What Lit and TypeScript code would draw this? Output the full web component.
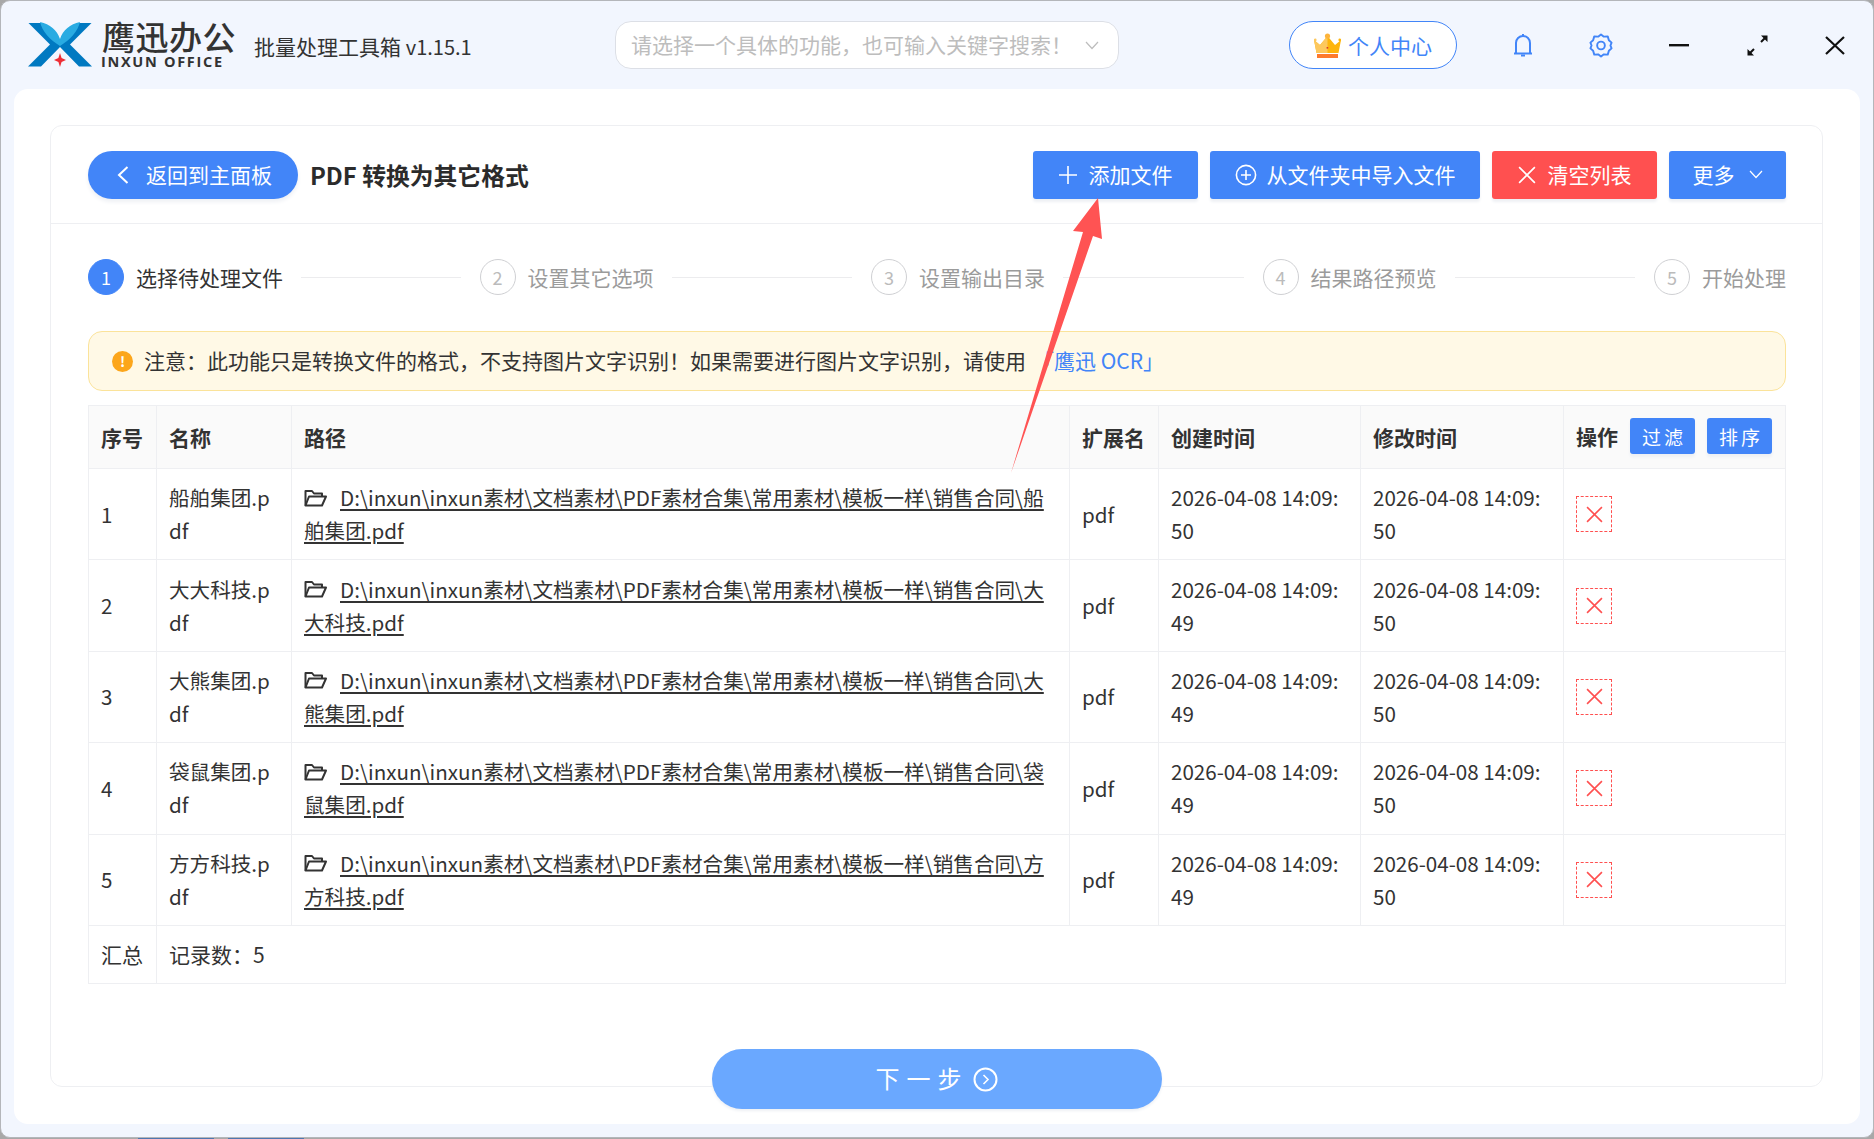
import { LitElement, html, css } from "lit";
import { customElement } from "lit/decorators.js";

const rows = ["船舶集团.pdf", "大大科技.pdf", "大熊集团.pdf", "袋鼠集团.pdf", "方方科技.pdf"];
const created = ["50", "49", "49", "49", "49"];
const base = "D:\\inxun\\inxun素材\\文档素材\\PDF素材合集\\常用素材\\模板一样\\销售合同\\";

const chevronDown = html`<svg class="chev" viewBox="0 0 14 9" width="14" height="9"><path d="M1 1l6 6.5L13 1" fill="none" stroke="currentColor" stroke-width="1.2"/></svg>`;

@customElement("app-root")
export class AppRoot extends LitElement {
  static styles = css`
    :host {
      display: block;
      width: 1874px;
      height: 1139px;
      position: relative;
      overflow: hidden;
      background: #a8a8a8;
      font-family: "Noto Sans CJK SC", "Noto Sans", sans-serif;
      font-size: 21px;
      color: #333;
    }
    * { box-sizing: border-box; }
    .window {
      height: 1138px;
      background: #f2f6fe;
      border: 1px solid #b4b6ba;
      border-radius: 10px;
      display: flex;
      flex-direction: column;
      overflow: hidden;
      position: relative;
      z-index: 1;
    }
    .desk { position: absolute; bottom: 0; height: 2px; width: 76px; background: #4f76b0; }
    .desk.a { left: 138px; }
    .desk.b { left: 228px; }
    .top {
      height: 88px;
      flex: none;
      display: flex;
      align-items: center;
      padding-left: 27px;
    }
    .top > * { flex: none; }
    .logo-mark { width: 64px; height: 46px; flex: none; }
    .brand { margin-left: 10px; width: 134px; display: flex; flex-direction: column; color: #333; padding-bottom: 2px; }
    .brand-cn { font-size: 33px; line-height: 33px; font-weight: 500; letter-spacing: 0.5px; white-space: nowrap; }
    .brand-en { font-family: "Open Sans", sans-serif; font-size: 14.5px; line-height: 14px; font-weight: 700; letter-spacing: 1.7px; white-space: nowrap; margin-top: 2px; margin-left: -1px; }
    .app-title { margin-left: 18px; width: 361px; white-space: nowrap; color: #333; padding-top: 2px; }
    .ver { font-size: 20px; }
    .search {
      width: 504px;
      height: 48px;
      background: #fff;
      border: 1px solid #dcdfe6;
      border-radius: 16px;
      display: flex;
      align-items: center;
      justify-content: space-between;
      padding: 0 19px 0 15px;
      color: #bdbdbd;
      white-space: nowrap;
    }
    .search span { margin-top: -2px; }
    .personal {
      margin-left: 170px;
      width: 168px;
      height: 48px;
      background: #fff;
      border: 1px solid #4285f8;
      border-radius: 24px;
      display: flex;
      align-items: center;
      justify-content: center;
      gap: 7px;
      color: #4285f8;
    }
    .tools { display: flex; align-items: center; margin-left: 27px; }
    .tool { display: flex; align-items: center; justify-content: center; width: 78px; height: 40px; flex: none; }
    .panel {
      flex: 1;
      margin: 0 13px 13px 13px;
      background: #fff;
      border-radius: 14px;
      padding: 36px 37px 15px 36px;
      display: flex;
      flex-direction: column;
      align-items: stretch;
      min-height: 0;
    }
    .card {
      height: 962px;
      flex: none;
      border: 1px solid #eeeff2;
      border-radius: 12px;
      padding: 0 36px 0 37px;
      display: flex;
      flex-direction: column;
    }
    .bar {
      height: 98px;
      flex: none;
      margin: 0 -36px 0 -37px;
      padding: 0 36px 0 37px;
      border-bottom: 1px solid #eeeff2;
      display: flex;
      align-items: center;
    }
    .back {
      width: 210px; height: 48px;
      border-radius: 24px;
      background: #4285f8;
      color: #fff;
      display: flex; align-items: center; justify-content: flex-start;
      padding-left: 29px;
      gap: 17px;
      box-shadow: 0 3px 4px #eef0f4;
      white-space: nowrap;
      flex: none;
    }
    .back span, .btn span, .notice span, .notice a { margin-top: -2px; }
    .title { margin-left: 12px; font-size: 23.8px; font-weight: 700; color: #2b2b2b; white-space: nowrap; flex: 1; margin-top: -1px; }
    .btn {
      height: 48px;
      border-radius: 3px;
      background: #4285f8;
      color: #fff;
      display: flex; align-items: center; justify-content: center;
      gap: 10px;
      box-shadow: 0 3px 3px #eef0f4;
      white-space: nowrap;
      flex: none;
    }
    .btn.red { background: #ff5050; }
    .add { width: 165px; gap: 12px; }
    .import { width: 270px; margin-left: 12px; }
    .clear { width: 165px; margin-left: 12px; gap: 12px; }
    .more { width: 117px; margin-left: 12px; gap: 14px; }
    .steps { display: flex; align-items: center; height: 36px; margin-top: 35px; flex: none; }
    .step { flex: 1 1 0; display: flex; align-items: center; min-width: 0; }
    .step.last { flex: none; }
    .num {
      width: 36px; height: 36px; border-radius: 50%;
      border: 1px solid #cfd0d3;
      color: #bbb;
      display: flex; align-items: center; justify-content: center;
      font-size: 18px; flex: none;
    }
    .num.on { background: #4285f8; border-color: #4285f8; color: #fff; }
    .slabel { margin-left: 12px; color: #9b9b9b; white-space: nowrap; margin-top: -1px; }
    .slabel.on { color: #333; }
    .sline { flex: 1; height: 1px; background: #ececee; margin: 0 19px 0 18px; }
    .notice {
      height: 60px; flex: none; margin-top: 36px;
      background: #fff9e6;
      border: 1px solid #fbe39a;
      border-radius: 14px;
      display: flex; align-items: center;
      padding-left: 23px;
      white-space: nowrap;
    }
    .bang {
      width: 21px; height: 21px; border-radius: 50%;
      background: #fca61b; color: #fff; font-size: 14px; font-weight: 700;
      display: flex; align-items: center; justify-content: center; margin-right: 11px; flex: none; line-height: 1;
    }
    .notice a { color: #4285f8; margin-left: 7px; }
    table {
      width: calc(100% - 1px);
      margin-top: 14px;
      border-collapse: collapse;
      table-layout: fixed;
      flex: none;
    }
    col.c1 { width: 68px; } col.c2 { width: 135px; } col.c3 { width: 778px; } col.c4 { width: 89px; }
    col.c5 { width: 202px; } col.c6 { width: 203px; } col.c7 { width: 222px; }
    th, td { border: 1px solid #eeeff2; padding: 0 12px; text-align: left; font-weight: 400; line-height: 33px; word-break: break-all; }
    th { height: 63px; background: #fafafa; font-weight: 700; color: #333; }
    td { height: 91.4px; font-size: 20.6px; }
    tr.sum td { height: 58px; border-left: none; border-right: none; font-size: 21px; }
    tr.sum td:nth-child(1) { border-right: 1px solid #eeeff2; border-left: 1px solid #eeeff2; }
    tr.sum td:nth-child(2) { border-right: 1px solid #eeeff2; }
    .ophead { display: flex; align-items: center; white-space: nowrap; margin-top: -2px; }
    .mini {
      width: 65px; height: 36px; border-radius: 3px; background: #4285f8; color: #fff;
      font-size: 19px; font-weight: 400; letter-spacing: 3px; padding-left: 3px;
      display: flex; align-items: center; justify-content: center; margin-left: 12px;
      box-shadow: 0 3px 3px #eef0f4;
      line-height: 1;
      flex: none;
    }
    .link { color: #333; text-decoration: underline; text-underline-offset: 3px; text-decoration-thickness: 1.5px; }
    .folder { width: 23px; height: 18px; margin-right: 13px; vertical-align: -0.5px; display: inline-block; }
    .del {
      width: 36px; height: 36px; border: 1px dashed #ff5050;
      display: flex; align-items: center; justify-content: center;
    }
    .next {
      align-self: center;
      width: 450px; height: 60px; flex: none;
      margin-top: -38px;
      position: relative;
      border-radius: 30px;
      background: #6aa8ff;
      color: #fff;
      display: flex; align-items: center; justify-content: center;
      gap: 11px;
      font-size: 24px;
      letter-spacing: 7px;
      box-shadow: 0 2px 3px #eef0f4;
    }
    .next span { margin-right: -7px; margin-top: -4px; }
    .arrow { position: absolute; left: 0; top: 0; width: 1874px; height: 1139px; pointer-events: none; z-index: 2; }
  `;

  private logo() {
    return html`<svg class="logo-mark" viewBox="0 0 64 46">
      <path d="M0 44.5 L22 22.5 L0.5 1 L14 1 L32 19 L50 1 L63.5 1 L42 22.5 L64 44.5 L51 44.5 L32 25 L13 44.5 Z" fill="#0079c1"/>
      <path d="M12 0 C22 2 29 8 32 17 C35 8 42 2 52 0 C50 9 42 18 32 24 C22 18 14 9 12 0 Z" fill="#29abe2"/>
      <path d="M32 31 L33.6 36 L38 38 L33.6 40 L32 45 L30.4 40 L26 38 L30.4 36 Z" fill="#ee2f36"/>
    </svg>`;
  }

  private crown() {
    return html`<svg width="27" height="25" viewBox="0 0 27 25">
      <path d="M0 7 L6 12 L13.5 3 L21 12 L27 7 L24.5 20 L2.5 20 Z" fill="#feb50c"/>
      <path d="M0 7 L6 12 L13.5 3 L13.5 20 L2.5 20 Z" fill="#fdc85d"/>
      <circle cx="13.5" cy="3" r="2.6" fill="#fdb43c"/><circle cx="1.2" cy="7" r="1.4" fill="#fdc85d"/><circle cx="25.8" cy="7" r="1.4" fill="#feb50c"/>
      <rect x="3" y="21" width="21" height="4" fill="#fe7a2c"/>
      <rect x="12.6" y="14" width="1.6" height="1.6" fill="#d8382c"/>
    </svg>`;
  }

  private icons() {
    return html`<div class="tools">
      <div class="tool"><svg width="20" height="25" viewBox="0 0 20 25" fill="none" stroke="#4285f8" stroke-width="2"><path d="M1 20.5 h18 M3 20.5 V10 a7 7 0 0 1 14 0 V20.5"/><path d="M10 1v2M8 22.5 h4" /></svg></div>
      <div class="tool"><svg width="24" height="25" viewBox="0 0 24 26" fill="none" stroke="#4285f8" stroke-width="2"><path d="M12 1.5 L15 3.8 L19 3.5 L20.2 7.5 L23 10 L21.8 13 L23 16 L20.2 18.5 L19 22.5 L15 22.2 L12 24.5 L9 22.2 L5 22.5 L3.8 18.5 L1 16 L2.2 13 L1 10 L3.8 7.5 L5 3.5 L9 3.8 Z" stroke-linejoin="round"/><circle cx="12" cy="13" r="4"/></svg></div>
      <div class="tool"><svg width="20" height="3" viewBox="0 0 20 3"><rect width="20" height="2.4" fill="#111"/></svg></div>
      <div class="tool"><svg width="21" height="21" viewBox="0 0 21 21" fill="none" stroke="#111" stroke-width="2"><path d="M7 14 L3 18 M14 7 L18 3"/><path d="M0.5 14 L0.5 20.5 L7 20.5 Z M14 0.5 L20.5 0.5 L20.5 7 Z" fill="#111" stroke="none"/></svg></div>
      <div class="tool"><svg width="20" height="19" viewBox="0 0 20 19" stroke="#111" stroke-width="2.2"><path d="M1 1 L19 18 M19 1 L1 18"/></svg></div>
    </div>`;
  }

  private folder() {
    return html`<svg class="folder" viewBox="0 0 23 18" fill="none" stroke="#333" stroke-width="2" stroke-linejoin="round"><path d="M1.5 16.5 V2 H8 L10 4.5 H18 V7"/><path d="M1.5 16.5 L5 7.5 H22 L18 16.5 Z"/></svg>`;
  }

  private x(size: number, color: string, sw = 1.6) {
    return html`<svg width="${size}" height="${size}" viewBox="0 0 16 16" stroke="${color}" stroke-width="${sw}"><path d="M1 1 L15 15 M15 1 L1 15"/></svg>`;
  }

  render() {
    const steps = ["选择待处理文件", "设置其它选项", "设置输出目录", "结果路径预览", "开始处理"];
    return html`
      <div class="desk a"></div><div class="desk b"></div>
      <div class="window">
        <div class="top">
          ${this.logo()}
          <div class="brand"><div class="brand-cn">鹰迅办公</div><div class="brand-en">INXUN OFFICE</div></div>
          <div class="app-title">批量处理工具箱 <span class="ver">v1.15.1</span></div>
          <div class="search"><span>请选择一个具体的功能，也可输入关键字搜索！</span>${chevronDown}</div>
          <div class="personal">${this.crown()}<span>个人中心</span></div>
          ${this.icons()}
        </div>
        <div class="panel">
          <div class="card">
            <div class="bar">
              <div class="back"><svg width="12" height="20" viewBox="0 0 12 20" fill="none" stroke="#fff" stroke-width="2"><path d="M10.5 2 L2 10 L10.5 18"/></svg><span>返回到主面板</span></div>
              <div class="title">PDF 转换为其它格式</div>
              <div class="btn add"><svg width="18" height="18" viewBox="0 0 18 18" stroke="#fff" stroke-width="1.6"><path d="M9 0V18M0 9H18"/></svg><span>添加文件</span></div>
              <div class="btn import"><svg width="22" height="22" viewBox="0 0 22 22" fill="none" stroke="#fff" stroke-width="1.6"><circle cx="11" cy="11" r="9.6"/><path d="M11 6V16M6 11H16"/></svg><span>从文件夹中导入文件</span></div>
              <div class="btn red clear">${this.x(18, "#fff", 1.5)}<span>清空列表</span></div>
              <div class="btn more"><span>更多</span>${chevronDown}</div>
            </div>
            <div class="steps">
              ${steps.map((s, i) => html`
                <div class="step ${i === 4 ? "last" : ""}">
                  <div class="num ${i === 0 ? "on" : ""}">${i + 1}</div>
                  <div class="slabel ${i === 0 ? "on" : ""}">${s}</div>
                  ${i < 4 ? html`<div class="sline"></div>` : ""}
                </div>`)}
            </div>
            <div class="notice">
              <div class="bang">!</div>
              <span>注意：此功能只是转换文件的格式，不支持图片文字识别！如果需要进行图片文字识别，请使用</span>
              <a>「鹰迅 OCR」</a>
            </div>
            <table>
              <colgroup>
                <col class="c1"/><col class="c2"/><col class="c3"/><col class="c4"/>
                <col class="c5"/><col class="c6"/><col class="c7"/>
              </colgroup>
              <thead><tr>
                <th>序号</th><th>名称</th><th>路径</th><th>扩展名</th><th>创建时间</th><th>修改时间</th>
                <th><div class="ophead">操作<div class="mini">过滤</div><div class="mini">排序</div></div></th>
              </tr></thead>
              <tbody>
                ${rows.map((r, i) => html`<tr>
                  <td>${i + 1}</td>
                  <td>${r}</td>
                  <td>${this.folder()}<span class="link">${base + r}</span></td>
                  <td>pdf</td>
                  <td>2026-04-08 14:09:${created[i]}</td>
                  <td>2026-04-08 14:09:50</td>
                  <td><div class="del">${this.x(17, "#ff5050", 1.5)}</div></td>
                </tr>`)}
                <tr class="sum"><td>汇总</td><td colspan="6">记录数：5</td></tr>
              </tbody>
            </table>
          </div>
          <div class="next"><span>下一步</span><svg width="25" height="25" viewBox="0 0 25 25" fill="none" stroke="#fff" stroke-width="2"><circle cx="12.5" cy="12.5" r="11"/><path d="M10.5 8 L15 12.5 L10.5 17" stroke-width="1.6"/></svg></div>
        </div>
      </div>
      <svg class="arrow" viewBox="0 0 1874 1139"><polygon points="1098,198 1102,239 1093,236 1011,473 1083,232 1073,231" fill="#ff5353"/></svg>
    `;
  }
}
